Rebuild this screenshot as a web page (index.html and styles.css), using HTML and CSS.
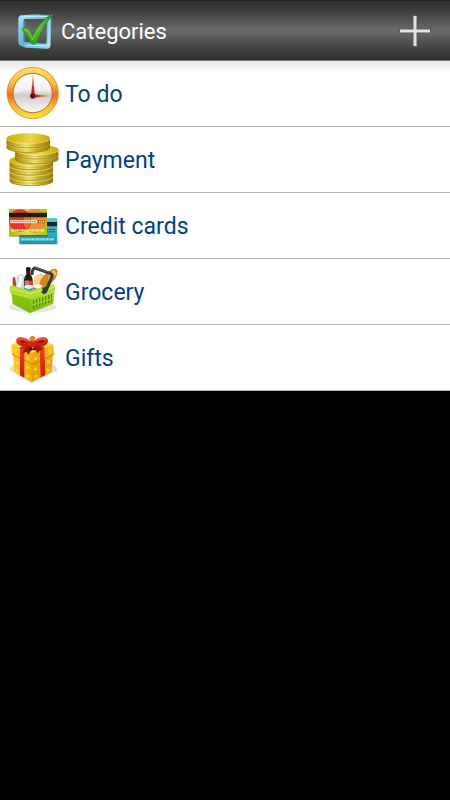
FILE: index.html
```html
<!DOCTYPE html>
<html lang="en">
<head>
<meta charset="utf-8">
<meta name="viewport" content="width=device-width, initial-scale=1">
<title>Categories</title>
<link rel="stylesheet" href="styles.css">
</head>
<body>
<header class="bar">
  <svg class="logo" viewBox="0 0 132 132" aria-hidden="true">
    <defs>
      <linearGradient id="frame" x1="0" y1="0" x2="1" y2="1"><stop offset="0" stop-color="#a5e4f5"/><stop offset=".5" stop-color="#62b4d5"/><stop offset="1" stop-color="#9be0f5"/></linearGradient>
      <linearGradient id="tick" x1="0" y1="0" x2="0" y2="1"><stop offset="0" stop-color="#2c8a22"/><stop offset=".5" stop-color="#55bd2d"/><stop offset="1" stop-color="#329c22"/></linearGradient>
    </defs>
    <path fill-rule="evenodd" d="M28 19Q70 15 111 18 118 19 118 27L116 107Q115 119 106 119L41 116 23 109Q19 106 19 98V29Q20 20 28 19ZM39 30Q35 30 35 35V94Q35 99 39 99L99 104Q104 104 104 98V34Q104 30 99 30Z" fill="url(#frame)"/>
    <path d="M35 37V95Q36 99 41 99L41 34Z" fill="#3d819e"/>
    <path d="M26 24Q70 20 112 23L110 110 42 109" fill="none" stroke="#c2f3ff" stroke-width="3"/>
    <path d="M30 59Q39 51 49 59 57 65 62 80 82 38 119 15 125 16 120 22 91 50 74 102 67 109 58 104 49 78 32 64Z" fill="url(#tick)" stroke="#2b851f" stroke-width="2"/>
    <path d="M38 61Q50 62 62 93 82 48 109 27" fill="none" stroke="#7dd54a" stroke-width="3" opacity=".7"/>
  </svg>
  <h1 class="title">Categories</h1>
  <button class="add" type="button" aria-label="Add category">
    <svg class="plus" viewBox="0 0 34 34" aria-hidden="true">
      <path d="M17 1V33M1 17H33" stroke="#5a5a5a" stroke-width="5"/>
      <path d="M17 2V32M2 17H32" stroke="#e2e2e2" stroke-width="3"/>
    </svg>
  </button>
</header>
<main>
  <ul class="list">
    <li><a class="row" href="#todo">
      <svg class="icon" viewBox="0 3 195 195" aria-hidden="true">
        <defs>
          <linearGradient id="ring" x1="0" y1="0" x2="0" y2="1"><stop offset="0" stop-color="#ffe060"/><stop offset=".3" stop-color="#fbc03c"/><stop offset=".54" stop-color="#f96a14"/><stop offset=".72" stop-color="#fbab2c"/><stop offset="1" stop-color="#ffe536"/></linearGradient>
          <linearGradient id="face" x1="0" y1="0" x2="0" y2="1"><stop offset="0" stop-color="#fff"/><stop offset=".45" stop-color="#e6e6e6"/><stop offset=".55" stop-color="#cdcdcd"/><stop offset="1" stop-color="#fafafa"/></linearGradient>
        </defs>
        <circle cx="98" cy="99" r="77" fill="url(#ring)" stroke="#b5832c" stroke-width="2"/>
        <circle cx="98" cy="99" r="59" fill="url(#face)" stroke="#a97735" stroke-width="3"/>
        <path d="M44 100Q75 86 112 92 145 94 152 86 146 50 98 45 50 48 43 92Z" fill="#fff" opacity=".4"/>
        <path d="M92 109 99 42 105 109ZM98 101 148 108 98 115Z" fill="#e66c62"/>
        <path d="M97 78 94 108 104 109 101 78ZM98 103 126 108 98 113Z" fill="#ce211e"/>
        <circle cx="98" cy="108" r="8" fill="#671518"/><circle cx="97" cy="107" r="3" fill="#271014"/>
      </svg><span class="label">To do</span></a></li>
    <li><a class="row" href="#payment">
      <svg class="icon" viewBox="0 3 195 195" aria-hidden="true">
        <defs>
          <linearGradient id="edge"><stop offset="0" stop-color="#a08208"/><stop offset=".2" stop-color="#d1b630"/><stop offset=".45" stop-color="#f5ec8c"/><stop offset=".7" stop-color="#cdb02a"/><stop offset="1" stop-color="#94780a"/></linearGradient>
          <linearGradient id="top"><stop offset="0" stop-color="#d0b000"/><stop offset=".55" stop-color="#e9d64b"/><stop offset="1" stop-color="#caa900"/></linearGradient>
          <g id="coin"><path d="M-65 0V13C-65 33 65 33 65 13V0Z" fill="url(#edge)"/><path d="M-65 13C-65 33 65 33 65 13" fill="none" stroke="#927712" stroke-width="2"/><path d="M-65 6C-65 26 65 26 65 6" fill="none" stroke="#a58a20" stroke-width="1"/><ellipse rx="65" ry="15" fill="url(#top)"/><path d="M-65 0C-65 20 65 20 65 0" fill="none" stroke="#f2e576" stroke-width="2"/></g>
        </defs>
        <use href="#coin" x="94" y="151"/><use href="#coin" x="94" y="135"/><use href="#coin" x="94" y="119"/><use href="#coin" x="94" y="103"/>
        <use href="#coin" x="110" y="85"/><use href="#coin" x="110" y="71"/>
        <use href="#coin" x="85" y="51"/><use href="#coin" x="85" y="37"/>
      </svg><span class="label">Payment</span></a></li>
    <li><a class="row" href="#cards">
      <svg class="icon" viewBox="0 3 195 195" aria-hidden="true">
        <defs>
          <linearGradient id="blue" x1="0" y1="0" x2="0" y2="1"><stop offset="0" stop-color="#55c8dc"/><stop offset="1" stop-color="#1696b5"/></linearGradient>
          <linearGradient id="lime"><stop offset="0" stop-color="#9fc400"/><stop offset=".5" stop-color="#dce326"/><stop offset="1" stop-color="#a9c90b"/></linearGradient>
          <clipPath id="card"><rect x="27" y="50" width="114" height="79" rx="3"/></clipPath>
        </defs>
        <path d="M56 154 60 159 174 159 173 80 60 82Z" fill="#777" opacity=".3"/>
        <rect x="58" y="78" width="113" height="78" rx="3" fill="url(#blue)"/>
        <path d="M58 90H171V103H58Z" fill="#172329"/><path d="M130 111H166V121H130Z" fill="#176a7c"/>
        <path d="M142 116H164" stroke="#79cad6" stroke-width="4" stroke-dasharray="6 3"/>
        <path d="M64 142H161" stroke="#a9e8ef" stroke-width="7" stroke-dasharray="7 2 4 2"/>
        <path d="M26 129H142L144 134H28Z" fill="#444" opacity=".5"/>
        <g clip-path="url(#card)">
          <path d="M27 50H141V129H27Z" fill="url(#lime)"/>
          <circle cx="104" cy="86" r="36" fill="#ed912d"/><circle cx="60" cy="86" r="34" fill="#e93328"/>
          <path d="M80 60Q104 86 80 112 60 86 80 60Z" fill="#ef6b2c"/>
          <path d="M27 62H141V76H27Z" fill="#211c19"/>
        </g>
        <path d="M30 89H111" stroke="#eee4d4" stroke-width="9"/><path d="M32 89H109" stroke="#9e7e6e" stroke-width="3" stroke-dasharray="5 2"/>
        <path d="M114 84H135V94H114Z" fill="#bd5c13"/><path d="M117 89H133" stroke="#ffd29a" stroke-width="5" stroke-dasharray="4 2"/>
        <path d="M34 115H132" stroke="#eff0b9" stroke-width="7" stroke-dasharray="7 2 4 2"/>
      </svg><span class="label">Credit cards</span></a></li>
    <li><a class="row" href="#grocery">
      <svg class="icon" viewBox="0 3 195 195" aria-hidden="true">
        <defs><linearGradient id="basket" x1="0" y1="0" x2="0" y2="1"><stop offset="0" stop-color="#bce736"/><stop offset="1" stop-color="#75bd00"/></linearGradient></defs>
        <ellipse cx="98" cy="147" rx="72" ry="16" fill="#aaa" opacity=".3"/>
        <path d="M38 60Q41 54 46 60L50 92H38Z" fill="#cf3b20"/>
        <path d="M51 54 62 48 76 54 72 94 47 92Z" fill="#a9e1f4"/><path d="M59 52 69 54 62 89 52 88Z" fill="#fff"/>
        <path d="M103 54 125 46 135 62 133 91H99Z" fill="#f3d48e"/>
        <path d="M118 80Q124 50 156 34 169 29 173 39 173 63 144 84L122 94Z" fill="#da8419"/>
        <path d="M146 68Q148 47 164 38M153 68Q157 52 169 44" stroke="#ffcb68" stroke-width="5" fill="none"/>
        <path d="M78 29Q85 25 91 30V49Q98 57 98 66V93H72V65Q74 55 79 48Z" fill="#321817"/><path d="M79 29H91V38H79Z" fill="#101010"/><path d="M73 68H97V81H73Z" fill="#c64831"/><path d="M78 68V81M84 68V81" stroke="#e9a785" stroke-width="3"/>
        <ellipse cx="86" cy="87" rx="14" ry="7" fill="#e6eff2"/><path d="M72 88Q86 99 100 88V103H72Z" fill="#31a5c1"/>
        <ellipse cx="114" cy="86" rx="13" ry="7" fill="#f5f2e9"/><path d="M101 88Q114 98 127 88V103H101Z" fill="#de3b2d"/>
        <path d="M29 91Q29 84 38 82L90 99 158 78Q166 84 164 94L160 137 93 164Q89 166 84 162L38 137 35 110Z" fill="url(#basket)"/>
        <path d="M29 91 90 109 164 87V100L91 124 31 105Z" fill="#b1dd2e"/>
        <path d="M31 91 90 107 162 88" fill="none" stroke="#d9f26e" stroke-width="3"/>
        <path d="M92 124 90 164 39 137 35 108Z" fill="#7cba0b" opacity=".65"/>
        <path d="M101 126V153M110 123V149M119 120V146M128 117V142M137 114V139M146 111V136M154 108V133" stroke="#5a8f10" stroke-width="4"/>
        <path d="M97 141 158 121" stroke="#a5d827" stroke-width="3"/>
        <path d="M96 51Q96 32 105 30L151 46Q158 49 156 56L137 101Q131 106 127 99" fill="none" stroke="#34383b" stroke-width="9" stroke-linejoin="round"/>
        <path d="M107 29 148 43M151 52 134 93" fill="none" stroke="#777f83" stroke-width="2"/>
        <path d="M126 89 139 86 140 103 130 107Z" fill="#34383b"/>
      </svg><span class="label">Grocery</span></a></li>
    <li><a class="row" href="#gifts">
      <svg class="icon" viewBox="0 3 195 195" aria-hidden="true">
        <defs>
          <linearGradient id="gold"><stop offset="0" stop-color="#ffcb20"/><stop offset=".6" stop-color="#efa50a"/><stop offset="1" stop-color="#f8c020"/></linearGradient>
          <linearGradient id="red" x1="0" y1="0" x2="0" y2="1"><stop offset="0" stop-color="#f0452e"/><stop offset="1" stop-color="#c4160c"/></linearGradient>
        </defs>
        <path d="M26 136 93 178 175 139 159 119 40 122Z" fill="#777" opacity=".25"/>
        <path d="M39 89 94 112 159 86 155 143 96 174 43 144Z" fill="url(#gold)"/>
        <path d="M94 112 159 86 155 143 96 174Z" fill="#e09a0a" opacity=".55"/>
        <path d="M34 62 96 42 160 62 163 91 96 121 36 91Z" fill="url(#gold)"/>
        <path d="M34 62 96 42 160 62 96 87Z" fill="#ffd73a"/><path d="M36 91 96 121 163 91" fill="none" stroke="#bd7605" stroke-width="2"/>
        <g fill="#ffdb4a" opacity=".75"><circle cx="49" cy="79" r="5"/><circle cx="82" cy="102" r="5"/><circle cx="53" cy="117" r="5"/><circle cx="82" cy="131" r="5"/><circle cx="52" cy="139" r="5"/><circle cx="83" cy="155" r="5"/><circle cx="107" cy="104" r="5"/><circle cx="148" cy="81" r="5"/><circle cx="107" cy="135" r="5"/><circle cx="145" cy="113" r="5"/><circle cx="144" cy="139" r="5"/><circle cx="108" cy="157" r="5"/></g>
        <path d="M60 69 73 75V161L60 154ZM119 76 133 70 136 153 122 160Z" fill="url(#red)"/>
        <path d="M58 71 112 49 124 54 75 77ZM77 51 135 70 121 76 65 55Z" fill="#cf2116"/>
        <path d="M95 64Q74 66 67 88L79 84 86 92 99 67 113 88 121 77 129 81Q119 63 95 64Z" fill="#a91109"/>
        <path d="M93 64Q60 74 49 55 46 41 61 39 80 39 94 57Z" fill="url(#red)"/><path d="M99 63Q137 74 144 53 145 40 130 39 111 39 98 57Z" fill="url(#red)"/>
        <path d="M82 56Q65 60 59 52 62 45 82 56ZM108 56Q128 60 134 52 130 44 108 56Z" fill="#8f1009"/>
        <path d="M55 45Q68 39 83 51M107 51Q124 39 138 45" fill="none" stroke="#ff7458" stroke-width="2"/>
        <path d="M88 43Q96 29 106 41L102 58H92Z" fill="#dc8520"/><ellipse cx="96" cy="60" rx="12" ry="9" fill="#d4271a"/>
        <path d="M87 73 94 69 96 75 102 70 108 79 97 78 90 82Z" fill="#3b190d"/>
      </svg><span class="label">Gifts</span></a></li>
  </ul>
</main>
</body>
</html>
```
FILE: styles.css
```css
* {
  box-sizing: border-box;
}

body {
  margin: 0;
  min-height: 100vh;
  background: #000;
  font-family: Roboto, "Liberation Sans", sans-serif;
}

.bar {
  display: flex;
  align-items: center;
  height: 61px;
  padding: 0 12px;
  background: linear-gradient(#303030 0, #3b3b3b 15%, #686868 48%, #686868 52%, #3c3c3c 85%, #303030 100%);
  border-top: 1px solid #222;
  border-bottom: 1px solid #777;
}

.logo {
  width: 44px;
  height: 44px;
}

.title {
  flex: 1;
  margin: 0;
  padding: 2px 0 0 5px;
  color: #fff;
  font-size: 22px;
  font-weight: 400;
  line-height: 28px;
}

.add {
  display: flex;
  padding: 6px;
  border: 0;
  background: none;
  cursor: pointer;
}

.plus {
  width: 34px;
  height: 34px;
}

.list {
  margin: 0;
  padding: 0;
  list-style: none;
}

.row {
  display: flex;
  align-items: center;
  background: #fff;
  border-bottom: 1px solid #b4b4b4;
  color: #003f8c;
  font-size: 23px;
  line-height: 28px;
  text-decoration: none;
}

li:first-child .row {
  background: linear-gradient(#e4e4e4, #fff 12px);
}

.icon {
  width: 65px;
  height: 65px;
}

.label {
  padding-top: 3px;
}
```
